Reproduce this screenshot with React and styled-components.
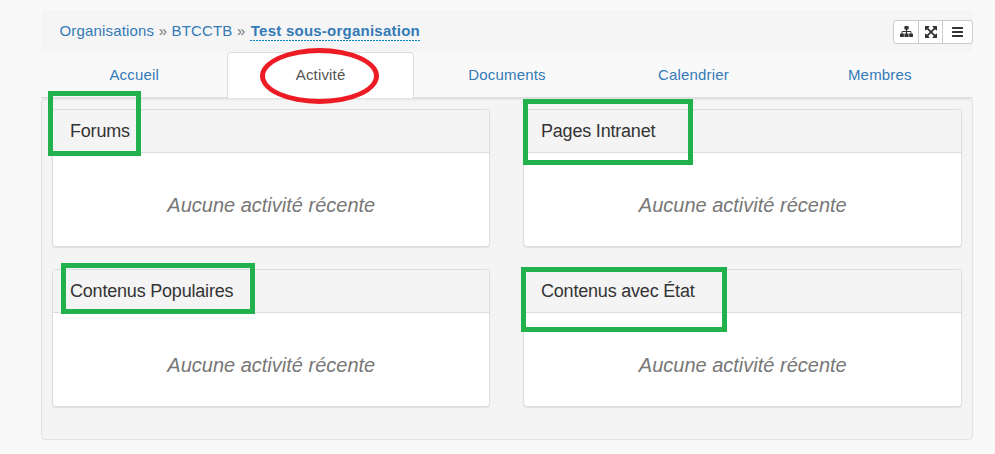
import React from "react";
import styled, { createGlobalStyle, css } from "styled-components";

const GlobalStyle = createGlobalStyle`
  *, *::before, *::after { box-sizing: border-box; }
  body {
    margin: 0;
    background: #f9f9f9;
    color: #333;
    font: 15px/20px "Liberation Sans", Arial, sans-serif;
  }
`;

const Page = styled.div`
  position: relative;
  height: 454px;
  padding: 10px 22px 0 41px;
  overflow: hidden;
`;

const Header = styled.header`
  display: flex;
  align-items: center;
  justify-content: space-between;
  height: 42px;
  padding-left: 18.5px;
  background: #f5f5f5;
  border-radius: 4px;
`;

const Crumbs = styled.nav`
  display: flex;
  gap: 4.5px;
  color: #777;
  white-space: nowrap;
`;

const Crumb = styled.a`
  color: #337ab7;
  height: 20px;
  letter-spacing: 0.16px;
  ${(p) =>
    p.$current &&
    css`
      font-weight: bold;
      letter-spacing: 0.24px;
      padding-left: 1px;
      background: repeating-linear-gradient(90deg, #0088cc 0 2px, transparent 2px 3px)
        left bottom / 100% 1px no-repeat;
    `}
`;

const ButtonGroup = styled.div`
  display: flex;
  width: 80px;
  height: 24px;
  margin-top: 2px;
  border: 1px solid #ccc;
  border-radius: 3px;
  background: #fff;
`;

const IconButton = styled.button`
  display: flex;
  align-items: center;
  justify-content: center;
  width: ${(p) => p.$width}px;
  padding: 0;
  border: 0;
  background: none;
  color: #333;
  & + & { border-left: 1px solid #ccc; }
  svg { display: block; fill: currentColor; }
`;

const Tabs = styled.nav`
  display: grid;
  grid-template-columns: repeat(5, 1fr);
  height: 46px;
  border-bottom: 1px solid #ddd;
`;

const Tab = styled.a`
  height: 46px;
  padding-top: 12px;
  text-align: center;
  letter-spacing: 0.16px;
  color: #337ab7;
  border: 1px solid transparent;
  border-bottom: 0;
  border-radius: 4px 4px 0 0;
  ${(p) =>
    p.$active &&
    css`
      color: #555;
      background: #fff;
      border-color: #ddd;
    `}
`;

const Well = styled.main`
  display: grid;
  grid-template-columns: 438px 439px;
  grid-auto-rows: 138px;
  gap: 22px 33px;
  height: 342px;
  padding: 10px;
  background: #f4f4f4;
  border: 1px solid #e3e3e3;
  border-radius: 4px;
  box-shadow: inset 0 1px 1px rgba(0, 0, 0, 0.05);
`;

const Panel = styled.section`
  background: #fff;
  border: 1px solid #ddd;
  border-radius: 4px;
  box-shadow: 0 1px 1px rgba(0, 0, 0, 0.08);
  overflow: hidden;
`;

const PanelTitle = styled.h3`
  height: 43px;
  margin: 0;
  padding-left: 17px;
  background: #f4f4f4;
  border-bottom: 1px solid #ddd;
  font-size: 18px;
  font-weight: normal;
  letter-spacing: -0.2px;
  line-height: 43px;
`;

const Empty = styled.p`
  margin: 0;
  text-align: center;
  color: #777;
  font-size: 20px;
  font-style: italic;
  line-height: 28px;
  padding: 38px 0 0 0.5px;
`;

const Highlight = styled.div`
  position: absolute;
  left: ${(p) => p.$x}px;
  top: ${(p) => p.$y}px;
  width: ${(p) => p.$w}px;
  height: ${(p) => p.$h}px;
  border: 5px solid ${(p) => (p.$round ? "#ed1c24" : "#22b14c")};
  border-radius: ${(p) => (p.$round ? "50%" : "0")};
  pointer-events: none;
`;

const SitemapIcon = () => (
  <svg width="14" height="12" viewBox="-1 0 14 12">
    <path d="M5 0h3q.6 0 .6.6v2.3q0 .6-.6.6h-.9v1.4h3.3q1 0 1 1v1.5h1q.6 0 .6.6v2.4q0 .6-.6.6H9.7q-.6 0-.6-.6V8q0-.6.6-.6h.8V5.9H7.1v1.5H8q.6 0 .6.6v2.4q0 .6-.6.6H5q-.6 0-.6-.6V8q0-.6.6-.6h.9V5.9H2.500v1.5h.8q.6 0 .6.6v2.4q0 .6-.6.6H.6Q0 11 0 10.4V8q0-.6.6-.6h1V5.9q0-1 1-1h3.300V3.500H5q-.6 0-.6-.6V.6Q4.400 0 5 0z" />
  </svg>
);

const ExpandIcon = () => (
  <svg width="12" height="12" viewBox="0 -128 1536 1536">
    <path d="M1283 995l-355-355 355-355 144 144q29 31 70 14 39-17 39-59v-448q0-26-19-45t-45-19h-448q-42 0-59 40-17 39 14 69l144 144-355 355-355-355 144-144q31-30 14-69-17-40-59-40h-448q-26 0-45 19t-19 45v448q0 42 40 59 39 17 69-14l144-144 355 355-355 355-144-144q-19-19-45-19-12 0-24 5-40 17-40 59v448q0 26 19 45t45 19h448q42 0 59-40 17-39-14-69l-144-144 355-355 355 355-144 144q-31 30-14 69 17 40 59 40h448q26 0 45-19t19-45v-448q0-42-39-59-13-5-25-5-26 0-45 19z" />
  </svg>
);

const BarsIcon = () => (
  <svg width="11" height="10" viewBox="0 0 11 10">
    <rect width="11" height="2" rx="0.5" />
    <rect y="4" width="11" height="2" rx="0.5" />
    <rect y="8" width="11" height="2" rx="0.5" />
  </svg>
);

const tabs = ["Accueil", "Activité", "Documents", "Calendrier", "Membres"];
const panels = ["Forums", "Pages Intranet", "Contenus Populaires", "Contenus avec État"];

export default function App() {
  return (
    <>
      <GlobalStyle />
      <Page>
        <Header>
          <Crumbs>
            <Crumb>Organisations</Crumb>
            <span>»</span>
            <Crumb>BTCCTB</Crumb>
            <span>»</span>
            <Crumb $current>Test sous-organisation</Crumb>
          </Crumbs>
          <ButtonGroup>
            <IconButton $width={24} aria-label="Structure"><SitemapIcon /></IconButton>
            <IconButton $width={24} aria-label="Agrandir"><ExpandIcon /></IconButton>
            <IconButton $width={30} aria-label="Menu"><BarsIcon /></IconButton>
          </ButtonGroup>
        </Header>
        <Tabs>
          {tabs.map((name) => (
            <Tab key={name} $active={name === "Activité"}>{name}</Tab>
          ))}
        </Tabs>
        <Well>
          {panels.map((title) => (
            <Panel key={title}>
              <PanelTitle>{title}</PanelTitle>
              <Empty>Aucune activité récente</Empty>
            </Panel>
          ))}
        </Well>
        <Highlight $round $x={260} $y={48} $w={119} $h={56} />
        <Highlight $x={48} $y={91} $w={93} $h={65} />
        <Highlight $x={523} $y={99} $w={170} $h={66} />
        <Highlight $x={61} $y={263} $w={194} $h={51} />
        <Highlight $x={521} $y={267} $w={206} $h={65} />
      </Page>
    </>
  );
}
